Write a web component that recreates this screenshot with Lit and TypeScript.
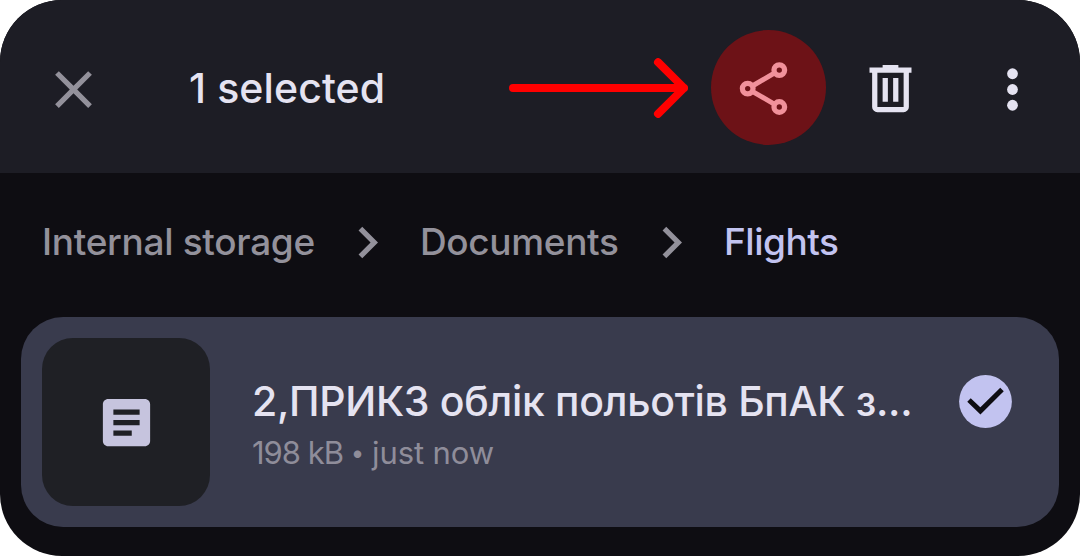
import { LitElement, html, css, svg } from "lit";
import { customElement, property } from "lit/decorators.js";

@customElement("top-bar")
class TopBar extends LitElement {
  @property({ type: Number }) count = 1;

  static styles = css`
    :host {
      display: flex;
      align-items: center;
      box-sizing: border-box;
      height: 173px;
      padding: 6px 36px 0 42px;
      background: #1d1d25;
      color: #e5e3f1;
    }
    svg { display: block; flex: none; }
    .close { color: #93919b; }
    .title {
      width: 320px;
      padding-left: 84px;
      font-size: 41px;
      line-height: 50px;
      font-weight: 500;
      white-space: nowrap;
      letter-spacing: 0.1px;
      margin-top: -4px;
    }
    .arrow { margin-top: -3px; }
    .share {
      display: flex;
      width: 115px;
      height: 115px;
      margin: -4px 33px 0 23px;
      border-radius: 50%;
      background: #6d1217;
      color: #f1919b;
    }
    .trash { margin-top: -2px; }
    .more { margin-left: 58.5px; }
  `;

  render() {
    return html`
      <svg class="close" width="63" height="63" viewBox="0 0 24 24" fill="currentColor">
        <path d="M19 6.41L17.59 5 12 10.59 6.41 5 5 6.41 10.59 12 5 17.59 6.41 19 12 13.41 17.59 19 19 17.59 13.41 12z"/>
      </svg>
      <div class="title">${this.count} selected</div>
      <svg class="arrow" width="179" height="60" viewBox="509 58 179 60" fill="none" stroke="#ff0000"
        stroke-width="8" stroke-linecap="round" stroke-linejoin="round">
        <path d="M513 88H684M658 62.2L684 88L658 113.8"/>
      </svg>
      <div class="share">
        <svg width="115" height="115" viewBox="711 30 115 115" fill="none" stroke="currentColor" stroke-width="5.3">
          <circle cx="779.3" cy="70.1" r="5.3"/>
          <circle cx="747.7" cy="88.6" r="5.3"/>
          <circle cx="779.3" cy="107" r="5.3"/>
          <path stroke-width="5" d="M752.3 86L774.7 72.8M752.3 91.3L774.7 104.3"/>
        </svg>
      </div>
      <svg class="trash" width="63" height="63" viewBox="0 0 24 24" fill="currentColor">
        <path d="M7 21q-.825 0-1.412-.587T5 19V6H4V4h5V3h6v1h5v2h-1v13q0 .825-.587 1.413T17 21zM17 6H7v13h10zM9 17h2V8H9zm4 0h2V8h-2z"/>
      </svg>
      <svg class="more" width="63" height="63" viewBox="0 0 24 24" fill="currentColor">
        <circle cx="12" cy="6" r="2.05"/><circle cx="12" cy="12" r="2.05"/><circle cx="12" cy="18" r="2.05"/>
      </svg>
    `;
  }
}

@customElement("path-crumbs")
class PathCrumbs extends LitElement {
  static styles = css`
    :host {
      display: flex;
      align-items: center;
      height: 138px;
      padding-left: 42px;
      gap: 21px;
      color: #93919b;
      font-size: 37px;
      line-height: 46px;
      font-weight: 500;
      white-space: nowrap;
    }
    svg { display: block; flex: none; }
    .storage { width: 273px; letter-spacing: -0.31px; }
    .folder { width: 199px; letter-spacing: -0.35px; }
    .current { color: #c2c3f0; letter-spacing: -0.5px; }
  `;

  private chevron() {
    return html`<svg width="63" height="63" viewBox="0 0 24 24" fill="currentColor">
      ${svg`<path d="M10 6L8.59 7.41 13.17 12l-4.58 4.59L10 18l6-6z"/>`}
    </svg>`;
  }

  render() {
    return html`
      <span class="storage">Internal storage</span>
      ${this.chevron()}
      <span class="folder">Documents</span>
      ${this.chevron()}
      <span class="current">Flights</span>
    `;
  }
}

@customElement("file-row")
class FileRow extends LitElement {
  @property() name = "";
  @property() size = "";
  @property() time = "";

  static styles = css`
    :host {
      display: flex;
      box-sizing: border-box;
      height: 210px;
      margin: 6px 21px 0;
      padding: 21px;
      border-radius: 42px;
      background: #393b4d;
    }
    svg { display: block; }
    .thumb {
      display: grid;
      place-items: center;
      width: 168px;
      height: 168px;
      border-radius: 31px;
      background: #1f2025;
      color: #c6c4de;
    }
    .info { width: 707px; padding: 38px 0 0 42px; white-space: nowrap; }
    .name {
      font-size: 41px;
      line-height: 50px;
      font-weight: 500;
      color: #e5e3f1;
      letter-spacing: -0.33px;
    }
    .meta {
      display: flex;
      margin-top: 7px;
      font-size: 31px;
      line-height: 40px;
      color: #8f8d9a;
    }
    .size { width: 91px; letter-spacing: -1px; }
    .dot { width: 29px; text-align: center; font-size: 24px; }
    .time { letter-spacing: -0.1px; }
    .check { margin-top: 37px; }
  `;

  render() {
    return html`
      <div class="thumb">
        <svg width="63" height="63" viewBox="0 0 24 24" fill="currentColor">
          <path d="M19 3H5c-1.1 0-2 .9-2 2v14c0 1.1.9 2 2 2h14c1.1 0 2-.9 2-2V5c0-1.100-.9-2-2-2zm-5 14H7v-2h7v2zm3-4H7v-2h10v2zm0-4H7V7h10v2z"/>
        </svg>
      </div>
      <div class="info">
        <div class="name">${this.name}</div>
        <div class="meta">
          <span class="size">${this.size}</span>
          <span class="dot">•</span>
          <span class="time">${this.time}</span>
        </div>
      </div>
      <svg class="check" width="53" height="53" viewBox="959 375 53 53">
        <circle cx="985.5" cy="401.5" r="26.4" fill="#c2c3f0"/>
        <path d="M969 400L980.400 410.900L1002 389.500" fill="none" stroke="#0e0d12" stroke-width="5"/>
      </svg>
    `;
  }
}

@customElement("app-root")
class AppRoot extends LitElement {
  static styles = css`
    :host {
      display: block;
      height: 556px;
      background: #fff;
      font-family: Inter, "Open Sans", sans-serif;
    }
    .screen {
      height: 556px;
      border-radius: 62px;
      overflow: hidden;
      background: #0e0d12;
    }
  `;

  render() {
    return html`
      <div class="screen">
        <top-bar .count=${1}></top-bar>
        <path-crumbs></path-crumbs>
        <file-row name="2,ПРИКЗ облік польотів БпАК з..." size="198 kB" time="just now"></file-row>
      </div>
    `;
  }
}
